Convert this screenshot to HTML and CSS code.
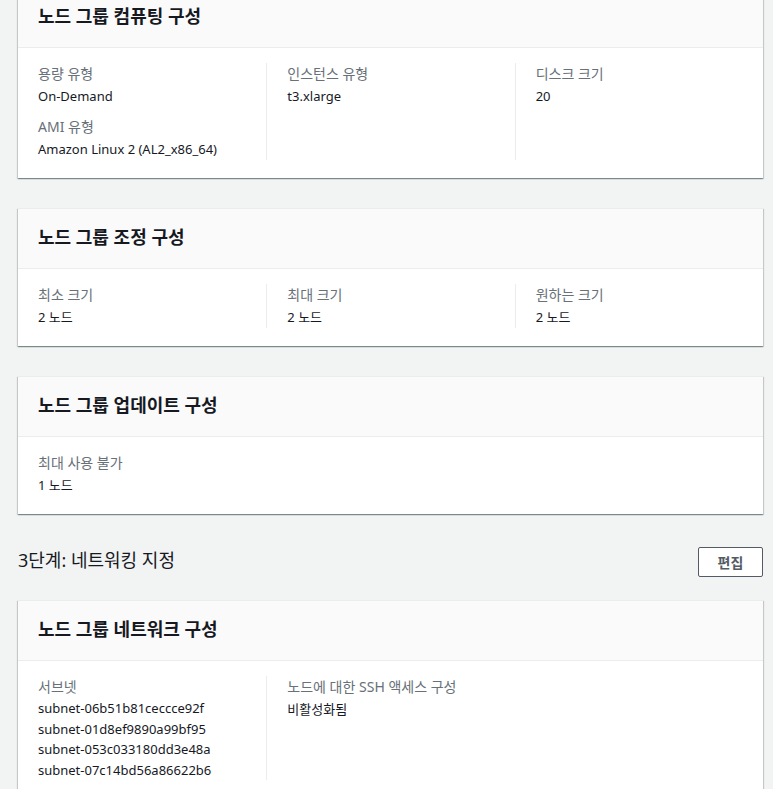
FILE: index.html
```html
<!DOCTYPE html>
<html lang="ko">
<head>
<meta charset="utf-8">
<link rel="stylesheet" href="styles.css">
</head>
<body>
<div class="page">
  <section class="card first">
    <div class="card-header"><h2>노드 그룹 컴퓨팅 구성</h2></div>
    <div class="card-body cols">
      <div class="col">
        <div class="field">
          <div class="label">용량 유형</div>
          <div class="value">On-Demand</div>
        </div>
        <div class="field">
          <div class="label">AMI 유형</div>
          <div class="value">Amazon Linux 2 (AL2_x86_64)</div>
        </div>
      </div>
      <div class="col">
        <div class="field">
          <div class="label">인스턴스 유형</div>
          <div class="value">t3.xlarge</div>
        </div>
      </div>
      <div class="col">
        <div class="field">
          <div class="label">디스크 크기</div>
          <div class="value">20</div>
        </div>
      </div>
    </div>
  </section>

  <section class="card">
    <div class="card-header"><h2>노드 그룹 조정 구성</h2></div>
    <div class="card-body cols">
      <div class="col">
        <div class="field">
          <div class="label">최소 크기</div>
          <div class="value">2 노드</div>
        </div>
      </div>
      <div class="col">
        <div class="field">
          <div class="label">최대 크기</div>
          <div class="value">2 노드</div>
        </div>
      </div>
      <div class="col">
        <div class="field">
          <div class="label">원하는 크기</div>
          <div class="value">2 노드</div>
        </div>
      </div>
    </div>
  </section>

  <section class="card">
    <div class="card-header"><h2>노드 그룹 업데이트 구성</h2></div>
    <div class="card-body single">
      <div class="field">
        <div class="label">최대 사용 불가</div>
        <div class="value">1 노드</div>
      </div>
    </div>
  </section>

  <div class="step-header">
    <h1>3단계: 네트워킹 지정</h1>
    <button class="btn">편집</button>
  </div>

  <section class="card">
    <div class="card-header"><h2>노드 그룹 네트워크 구성</h2></div>
    <div class="card-body cols">
      <div class="col">
        <div class="field">
          <div class="label">서브넷</div>
          <div class="value list">
            <div>subnet-06b51b81ceccce92f</div>
            <div>subnet-01d8ef9890a99bf95</div>
            <div>subnet-053c033180dd3e48a</div>
            <div>subnet-07c14bd56a86622b6</div>
          </div>
        </div>
      </div>
      <div class="col">
        <div class="field">
          <div class="label">노드에 대한 SSH 액세스 구성</div>
          <div class="value">비활성화됨</div>
        </div>
      </div>
      <div class="col-empty"></div>
    </div>
  </section>
</div>
</body>
</html>
```
FILE: styles.css
```css
* { box-sizing: border-box; }
html, body {
  margin: 0;
  padding: 0;
  background: #f2f3f3;
}
body {
  font-family: "Noto Sans", "Noto Sans CJK KR", sans-serif;
  font-size: 14px;
  line-height: 22px;
  color: #16191f;
}
.page {
  padding: 0 10px 40px 18px;
  margin-top: -13px;
}
.card {
  background: #fff;
  border-top: 1px solid #eaeded;
  box-shadow: 0 1px 1px 0 rgba(0,28,36,.3), 1px 1px 1px 0 rgba(0,28,36,.15), -1px 1px 1px 0 rgba(0,28,36,.15);
  margin-bottom: 30px;
}
.card-header {
  background: #fafafa;
  border-bottom: 1px solid #eaeded;
  padding: 17px 20px 20px;
}
.card-header h2 {
  margin: 0;
  font-size: 18px;
  line-height: 22px;
  font-weight: 700;
  color: #16191f;
}
.card-body {
  padding: 15px 0 18px;
}
.cols {
  display: grid;
  grid-template-columns: repeat(3, 1fr);
}
.col {
  padding: 0 20px;
  display: flex;
  flex-direction: column;
  gap: 9px;
}
.col + .col {
  border-left: 1px solid #eaeded;
}
.single {
  padding-left: 20px;
  padding-right: 20px;
}
.label {
  color: #687078;
  line-height: 22px;
}
.value {
  font-size: 13px;
  line-height: 22px;
}
.value.list > div {
  line-height: 20.5px;
}
.step-header {
  display: flex;
  align-items: center;
  justify-content: space-between;
  margin-top: 33px;
  margin-bottom: 23px;
}
.step-header h1 {
  margin: 0 0 4px;
  font-size: 18px;
  font-weight: 400;
  line-height: 26px;
  color: #16191f;
}
.btn {
  width: 65px;
  height: 30px;
  background: #fff;
  border: 1px solid #545b64;
  border-radius: 2px;
  font-family: inherit;
  font-size: 14px;
  font-weight: 700;
  color: #545b64;
  padding: 0;
}
```
